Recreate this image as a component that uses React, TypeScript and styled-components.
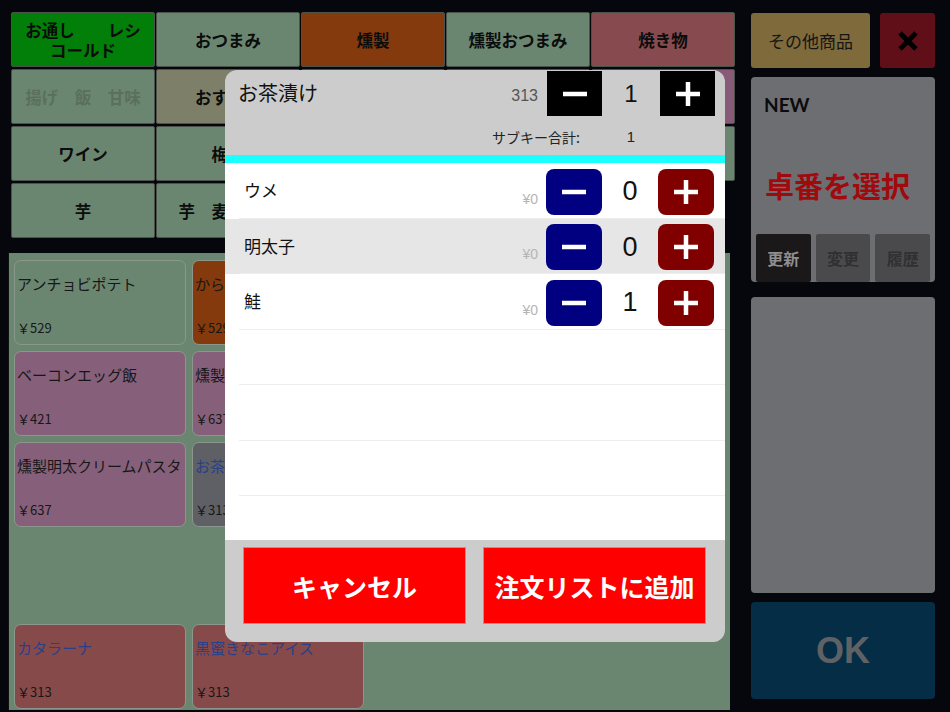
import React from 'react';
import styled, { createGlobalStyle } from 'styled-components';

const GlobalStyle = createGlobalStyle`
  html, body {
    margin: 0;
    padding: 0;
    background: #06070c;
  }
  body {
    font-family: "Liberation Sans", "Noto Sans CJK JP", sans-serif;
  }
  * {
    box-sizing: border-box;
  }
`;

const JP = `"Noto Sans CJK JP", "Liberation Sans", sans-serif`;

const Page = styled.div`
  position: relative;
  display: flex;
  gap: 17px;
  width: 950px;
  height: 712px;
  padding: 12px 15px 0 8px;
  overflow: hidden;
  background: #06070c;
`;

const LeftColumn = styled.div`
  display: flex;
  flex-direction: column;
  width: 726px;
`;

const CategoryGrid = styled.div`
  display: grid;
  grid-template-columns: repeat(5, 144px);
  grid-auto-rows: 55px;
  gap: 2px 1px;
  margin-left: 3px;
`;

const CategoryButton = styled.div<{ $bg: string; $muted?: boolean }>`
  display: flex;
  align-items: center;
  justify-content: center;
  text-align: center;
  background: ${(p) => p.$bg};
  border: 1px solid #4b524b;
  border-radius: 2px;
  color: ${(p) => (p.$muted ? '#5b6f5f' : '#0c0c0c')};
  font-family: ${JP};
  font-size: 16.5px;
  font-weight: 700;
  line-height: 20px;
  white-space: pre;
`;

const EmptyCell = styled.div``;

const ItemArea = styled.div`
  display: grid;
  grid-template-columns: repeat(4, 172px);
  grid-auto-rows: 85px;
  gap: 6px;
  margin-top: 15px;
  width: 722px;
  height: 457px;
  padding: 7px 5px 0;
  background: #6b8670;
  border-left: 1px solid #0f1210;
  overflow: hidden;
`;

const ItemCard = styled.div<{ $bg: string }>`
  display: flex;
  flex-direction: column;
  justify-content: space-between;
  padding: 13px 0 8px 2px;
  background: ${(p) => p.$bg};
  border: 1px solid #8b978d;
  border-radius: 7px;
  font-family: ${JP};
  color: #171717;
`;

const ItemName = styled.div<{ $blue?: boolean }>`
  font-size: 15px;
  line-height: 20px;
  color: ${(p) => (p.$blue ? '#2b3f86' : '#171717')};
  white-space: nowrap;
  overflow: hidden;
`;

const ItemPrice = styled.div`
  font-size: 13px;
  line-height: 16px;
`;

const RightColumn = styled.div`
  display: flex;
  flex-direction: column;
  width: 184px;
  padding-top: 1px;
`;

const TopButtons = styled.div`
  display: flex;
  gap: 10px;
  height: 55px;
`;

const OtherButton = styled.div`
  display: flex;
  align-items: center;
  justify-content: center;
  width: 119px;
  background: #7f6a3b;
  border-radius: 3px;
  font-family: ${JP};
  font-size: 17px;
  color: #151515;
`;

const CloseButton = styled.div`
  display: flex;
  align-items: center;
  justify-content: center;
  flex: 1;
  background: #600f19;
  border-radius: 3px;
`;

const InfoPanel = styled.div`
  display: flex;
  flex-direction: column;
  margin-top: 9px;
  height: 205px;
  padding: 16px 5px 0;
  background: #6d6e72;
  border-radius: 4px;
`;

const NewLabel = styled.div`
  padding-left: 8px;
  font-family: "Lato", "Liberation Sans", sans-serif;
  font-size: 19px;
  font-weight: 700;
  color: #0b0b0d;
`;

const TableSelect = styled.div`
  margin-top: 48px;
  padding-left: 9px;
  font-family: ${JP};
  font-size: 29px;
  font-weight: 700;
  color: #a10a0d;
`;

const HistoryRow = styled.div`
  display: flex;
  gap: 5px;
  margin-top: 28px;
  height: 55px;
`;

const HistoryButton = styled.div<{ $active?: boolean }>`
  display: flex;
  align-items: center;
  justify-content: center;
  width: 55px;
  background: ${(p) => (p.$active ? '#1a1818' : '#4a4a4d')};
  border-radius: 2px;
  font-family: ${JP};
  font-size: 16px;
  font-weight: 700;
  color: ${(p) => (p.$active ? '#8e8e90' : '#303033')};
`;

const ListPanel = styled.div`
  margin-top: 15px;
  height: 296px;
  background: #6d6e72;
  border-radius: 4px;
`;

const OkButton = styled.div`
  display: flex;
  align-items: center;
  justify-content: center;
  margin-top: 9px;
  height: 97px;
  background: #052d45;
  border-radius: 4px;
  font-family: "Liberation Sans", sans-serif;
  font-size: 36px;
  font-weight: 700;
  color: #5f6265;
`;

/* modal */

const Modal = styled.div`
  position: absolute;
  left: 225px;
  top: 70px;
  display: flex;
  flex-direction: column;
  width: 500px;
  height: 572px;
  background: #cccccc;
  border-radius: 12px;
  overflow: hidden;
`;

const ModalHeader = styled.div`
  flex: none;
  height: 85px;
  padding: 1px 10px 0 13px;
`;

const HeaderRow = styled.div`
  display: flex;
  align-items: center;
  height: 45px;
`;

const Title = styled.div`
  flex: 1;
  align-self: flex-start;
  padding-top: 7px;
  font-family: ${JP};
  font-size: 20px;
  color: #111;
`;

const HeaderPrice = styled.div`
  margin-right: 9px;
  padding-top: 5px;
  font-size: 16px;
  color: #555;
`;

const SquareButton = styled.div`
  display: flex;
  align-items: center;
  justify-content: center;
  width: 55px;
  height: 45px;
  background: #000;
`;

const HeaderCount = styled.div`
  width: 58px;
  text-align: center;
  font-size: 24px;
  color: #111;
`;

const SubRow = styled.div`
  display: flex;
  align-items: center;
  justify-content: flex-end;
  height: 41px;
  padding-right: 55px;
`;

const SubLabel = styled.div`
  font-family: ${JP};
  font-size: 14px;
  color: #222;
`;

const SubCount = styled.div`
  width: 58px;
  margin-left: 22px;
  text-align: center;
  font-size: 15px;
  color: #222;
`;

const CyanBar = styled.div`
  flex: none;
  height: 8px;
  background: #1affff;
`;

const OptionList = styled.div`
  flex: none;
  height: 377px;
  background: #fff;
  overflow: hidden;
`;

const OptionRow = styled.div<{ $shaded?: boolean }>`
  position: relative;
  display: flex;
  align-items: center;
  height: 55.5px;
  padding: 2px 11px 0 19px;
  background: ${(p) => (p.$shaded ? '#e6e6e6' : '#fff')};

  &::after {
    content: '';
    position: absolute;
    left: 14px;
    right: 0;
    bottom: 0;
    height: 1px;
    background: #eeeeee;
  }
`;

const OptionName = styled.div`
  flex: 1;
  padding-bottom: 4px;
  font-family: ${JP};
  font-size: 17px;
  color: #111;
`;

const OptionPrice = styled.div`
  margin-right: 8px;
  padding-top: 14px;
  font-size: 14px;
  color: #b5b5b5;
`;

const RoundButton = styled.div<{ $bg: string }>`
  display: flex;
  align-items: center;
  justify-content: center;
  width: 56px;
  height: 46px;
  background: ${(p) => p.$bg};
  border-radius: 8px;
`;

const OptionCount = styled.div`
  width: 56px;
  text-align: center;
  font-size: 27px;
  color: #111;
`;

const ModalFooter = styled.div`
  flex: none;
  display: flex;
  gap: 17px;
  height: 102px;
  padding: 7px 19px 0 18px;
`;

const RedButton = styled.div`
  display: flex;
  align-items: center;
  justify-content: center;
  width: 223px;
  height: 77px;
  background: #ff0000;
  border: 1px solid #f07a7a;
  font-family: ${JP};
  font-size: 25px;
  font-weight: 700;
  color: #fff;
`;

const MinusIcon = () => (
  <svg width="26" height="26" viewBox="0 0 26 26">
    <line x1="1" y1="13" x2="25" y2="13" stroke="#fff" strokeWidth="4.5" />
  </svg>
);

const PlusIcon = () => (
  <svg width="26" height="26" viewBox="0 0 26 26">
    <line x1="1" y1="13" x2="25" y2="13" stroke="#fff" strokeWidth="4.5" />
    <line x1="13" y1="1" x2="13" y2="25" stroke="#fff" strokeWidth="4.5" />
  </svg>
);

const CrossIcon = () => (
  <svg width="20" height="20" viewBox="0 0 20 20">
    <line x1="2" y1="2" x2="18" y2="18" stroke="#000" strokeWidth="5" />
    <line x1="18" y1="2" x2="2" y2="18" stroke="#000" strokeWidth="5" />
  </svg>
);

const GREEN = '#6b8670';
const PINK = '#86607a';

const categories: ({ label: string; bg: string; muted?: boolean } | null)[] = [
  { label: 'お通し　　レシ\nコールド', bg: '#027f09' },
  { label: 'おつまみ', bg: GREEN },
  { label: '燻製', bg: '#843a0c' },
  { label: '燻製おつまみ', bg: GREEN },
  { label: '焼き物', bg: '#874a4e' },
  { label: '揚げ　飯　甘味', bg: GREEN, muted: true },
  { label: 'おすすめ', bg: '#7e7f68' },
  { label: '日本酒', bg: GREEN },
  { label: '焼酎', bg: GREEN },
  { label: 'デザート', bg: '#875b78' },
  { label: 'ワイン', bg: GREEN },
  { label: '梅酒', bg: GREEN },
  { label: 'ビール', bg: GREEN },
  { label: 'サワー', bg: GREEN },
  { label: 'ソフトドリンク', bg: GREEN },
  { label: '芋', bg: GREEN },
  { label: '芋　麦　黒糖', bg: GREEN },
  { label: '麦', bg: GREEN },
  { label: '米', bg: GREEN },
  null,
];

const items: ({ name: string; price: number; bg: string; blue?: boolean } | null)[] = [
  { name: 'アンチョビポテト', price: 529, bg: GREEN },
  { name: 'からあげ', price: 529, bg: '#843a0c' },
  { name: '燻製ナッツ', price: 421, bg: GREEN },
  { name: '焼き鳥', price: 529, bg: '#874a4e' },
  { name: 'ベーコンエッグ飯', price: 421, bg: PINK },
  { name: '燻製カレー', price: 637, bg: PINK },
  { name: '焼きおにぎり', price: 313, bg: PINK },
  { name: '雑炊', price: 421, bg: PINK },
  { name: '燻製明太クリームパスタ', price: 637, bg: PINK },
  { name: 'お茶漬け', price: 313, bg: '#5e6065', blue: true },
  null,
  null,
  null,
  null,
  null,
  null,
  { name: 'カタラーナ', price: 313, bg: '#874a4a', blue: true },
  { name: '黒蜜きなこアイス', price: 313, bg: '#874a4a', blue: true },
];

const options = [
  { name: 'ウメ', price: 0, count: 0 },
  { name: '明太子', price: 0, count: 0 },
  { name: '鮭', price: 0, count: 1 },
  null,
  null,
  null,
  null,
];

export default function App() {
  return (
    <>
      <GlobalStyle />
      <Page>
        <LeftColumn>
          <CategoryGrid>
            {categories.map((c, i) =>
              c ? (
                <CategoryButton key={i} $bg={c.bg} $muted={c.muted}>
                  {c.label}
                </CategoryButton>
              ) : (
                <EmptyCell key={i} />
              )
            )}
          </CategoryGrid>
          <ItemArea>
            {items.map((it, i) =>
              it ? (
                <ItemCard key={i} $bg={it.bg}>
                  <ItemName $blue={it.blue}>{it.name}</ItemName>
                  <ItemPrice>￥{it.price}</ItemPrice>
                </ItemCard>
              ) : (
                <EmptyCell key={i} />
              )
            )}
          </ItemArea>
        </LeftColumn>

        <RightColumn>
          <TopButtons>
            <OtherButton>その他商品</OtherButton>
            <CloseButton>
              <CrossIcon />
            </CloseButton>
          </TopButtons>
          <InfoPanel>
            <NewLabel>NEW</NewLabel>
            <TableSelect>卓番を選択</TableSelect>
            <HistoryRow>
              <HistoryButton $active>更新</HistoryButton>
              <HistoryButton>変更</HistoryButton>
              <HistoryButton>履歴</HistoryButton>
            </HistoryRow>
          </InfoPanel>
          <ListPanel />
          <OkButton>OK</OkButton>
        </RightColumn>

        <Modal>
          <ModalHeader>
            <HeaderRow>
              <Title>お茶漬け</Title>
              <HeaderPrice>313</HeaderPrice>
              <SquareButton>
                <MinusIcon />
              </SquareButton>
              <HeaderCount>1</HeaderCount>
              <SquareButton>
                <PlusIcon />
              </SquareButton>
            </HeaderRow>
            <SubRow>
              <SubLabel>サブキー合計:</SubLabel>
              <SubCount>1</SubCount>
            </SubRow>
          </ModalHeader>
          <CyanBar />
          <OptionList>
            {options.map((o, i) =>
              o ? (
                <OptionRow key={i} $shaded={i === 1}>
                  <OptionName>{o.name}</OptionName>
                  <OptionPrice>¥{o.price}</OptionPrice>
                  <RoundButton $bg="#000080">
                    <MinusIcon />
                  </RoundButton>
                  <OptionCount>{o.count}</OptionCount>
                  <RoundButton $bg="#800000">
                    <PlusIcon />
                  </RoundButton>
                </OptionRow>
              ) : (
                <OptionRow key={i} />
              )
            )}
          </OptionList>
          <ModalFooter>
            <RedButton>キャンセル</RedButton>
            <RedButton>注文リストに追加</RedButton>
          </ModalFooter>
        </Modal>
      </Page>
    </>
  );
}
